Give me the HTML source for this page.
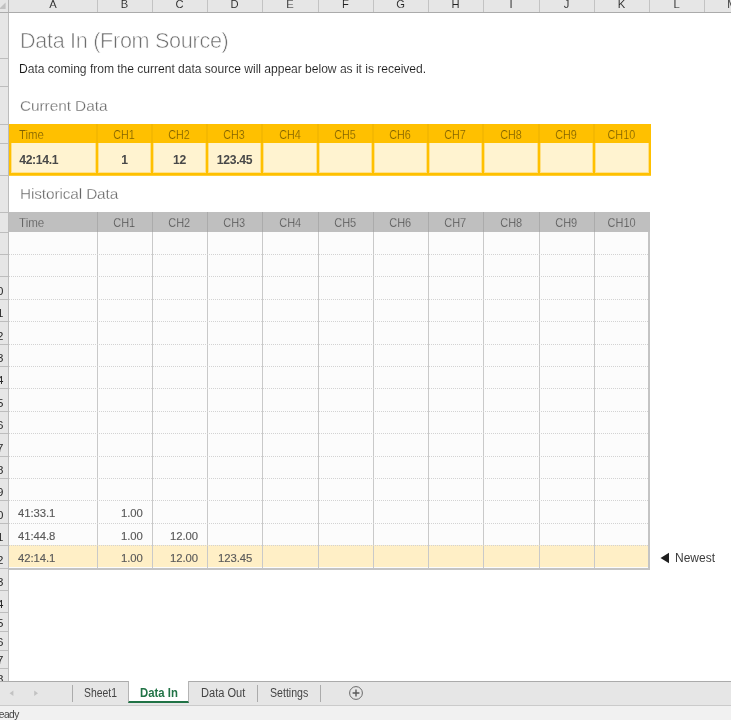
<!DOCTYPE html><html><head><meta charset="utf-8"><title>Data In</title><style>
*{margin:0;padding:0;box-sizing:border-box}
html,body{width:731px;height:720px;overflow:hidden;background:#fff}
body{position:relative;font-family:"Liberation Sans",sans-serif;color:#262626}
.abs{position:absolute}
h1,h2,.sub,.ch,.cc,.hh,.hd,.tab,.cl,.rn,#new span,#status div{will-change:transform}
#colhdr{left:0;top:0;width:731px;height:13px;background:#e6e6e6;border-bottom:1px solid #ababab}
.cl{position:absolute;top:-4.6px;height:18px;line-height:18px;font-size:11.2px;text-align:center;color:#222;-webkit-text-stroke:0.08px #e6e6e6}
.cs{position:absolute;top:0;width:1px;height:12px;background:#c3c3c3}
#rowhdr{left:0;top:13px;width:9px;height:668px;background:#e6e6e6;border-right:1px solid #bcbcbc}
.rs{position:absolute;left:0;width:8px;height:1px;background:#bdbdbd}
.rn{position:absolute;left:-20px;width:23.5px;text-align:right;font-size:11.5px;height:12px;line-height:12px;color:#262626;white-space:nowrap}
#corner{left:0;top:0;width:9px;height:13px;background:#e6e6e6;border-right:1px solid #b5b5b5;border-bottom:1px solid #ababab}
h1{position:absolute;left:20px;top:27px;font-weight:normal;font-size:21.6px;line-height:28px;color:#6e6e6e;white-space:nowrap;letter-spacing:-0.3px;-webkit-text-stroke:0.6px #fff}
.sub{position:absolute;left:19px;top:59.5px;font-size:12.1px;line-height:18px;color:#161616;white-space:nowrap;letter-spacing:-0.03px;-webkit-text-stroke:0.1px #fff}
h2{position:absolute;left:19.5px;font-weight:normal;font-size:15.4px;line-height:20px;color:#666;white-space:nowrap;letter-spacing:-0.06px;-webkit-text-stroke:0.28px #fff}
#cur{left:9px;top:124px;width:642px;height:51px;background:#ffc000}
.ch{position:absolute;top:1px;height:20px;line-height:20px;font-size:12px;color:#7f6000;text-align:center;white-space:nowrap;-webkit-text-stroke:0.2px #ffc000}
.cc{position:absolute;top:19px;height:30px;background:#fff3d0;border-left:1px solid #ffe085;border-right:1px solid #ffe085;border-bottom:1px solid #ffe38f;line-height:34px;font-size:12.2px;letter-spacing:-0.33px;font-weight:bold;color:#484848;text-align:center;white-space:nowrap}
#hist{left:9px;top:212px;width:641px;height:358px;background:#fcfcfc;border-right:2px solid #c4c4c4;border-bottom:2px solid #c4c4c4}
#hh{position:absolute;left:0;top:0;width:641px;height:20px;background:#bfbfbf}
.hh{position:absolute;top:1.3px;height:20px;line-height:20px;font-size:12.2px;color:#505050;text-align:center;white-space:nowrap;-webkit-text-stroke:0.25px #bfbfbf}
.sx{display:inline-block;transform:scaleX(0.9)}
.sxl{display:inline-block;transform:scaleX(0.95);transform-origin:0 50%}
.hv{position:absolute;top:0;width:1px;height:356px;background:#c9c9c9}
.hv2{position:absolute;top:0;width:1px;height:20px;background:#ababab}
.hl{position:absolute;left:0;width:639px;height:1px;background:repeating-linear-gradient(90deg,#d3d3d3 0,#d3d3d3 1px,transparent 1px,transparent 2px)}
.hd{position:absolute;height:22px;line-height:24px;font-size:11.3px;letter-spacing:-0.06px;color:#5a5a5a;-webkit-text-stroke:0.15px #5a5a5a;white-space:nowrap}
#new{left:660px;top:549.6px;height:16px;line-height:16px;font-size:12px;color:#3b3b3b;white-space:nowrap}
#tabs{left:0;top:681px;width:731px;height:24px;background:#e6e6e6;border-top:1px solid #ababab}
#status{left:0;top:705px;width:731px;height:15px;background:#f1f1f1;border-top:1px solid #cbcbcb}
.tab{position:absolute;top:-0.4px;height:24px;line-height:23px;font-size:12px;color:#444;white-space:nowrap}
.t{display:inline-block;transform-origin:0 50%}
.tsep{position:absolute;top:3px;width:1px;height:17px;background:#ababab}
</style></head><body>
<h1>Data In (From Source)</h1>
<div class="sub">Data coming from the current data source will appear below as it is received.</div>
<h2 style="top:95.8px">Current Data</h2>
<h2 style="top:184.2px;letter-spacing:-0.13px">Historical Data</h2>
<div id="cur" class="abs">
<div class="ch" style="left:0px;width:88px;text-align:left;padding-left:10px"><span class="sxl">Time</span></div>
<div class="cc" style="left:2px;width:85px;text-align:left;padding-left:7.2px">42:14.1</div>
<div class="ch" style="left:88px;width:55px"><span class="sx">CH1</span></div>
<div style="position:absolute;left:87px;top:0;width:2px;height:19px;background:#f5b800"></div>
<div class="cc" style="left:89px;width:53px">1</div>
<div class="ch" style="left:143px;width:55px"><span class="sx">CH2</span></div>
<div style="position:absolute;left:142px;top:0;width:2px;height:19px;background:#f5b800"></div>
<div class="cc" style="left:144px;width:53px">12</div>
<div class="ch" style="left:198px;width:55px"><span class="sx">CH3</span></div>
<div style="position:absolute;left:197px;top:0;width:2px;height:19px;background:#f5b800"></div>
<div class="cc" style="left:199px;width:53px">123.45</div>
<div class="ch" style="left:253px;width:56px"><span class="sx">CH4</span></div>
<div style="position:absolute;left:252px;top:0;width:2px;height:19px;background:#f5b800"></div>
<div class="cc" style="left:254px;width:54px"></div>
<div class="ch" style="left:309px;width:55px"><span class="sx">CH5</span></div>
<div style="position:absolute;left:308px;top:0;width:2px;height:19px;background:#f5b800"></div>
<div class="cc" style="left:310px;width:53px"></div>
<div class="ch" style="left:364px;width:55px"><span class="sx">CH6</span></div>
<div style="position:absolute;left:363px;top:0;width:2px;height:19px;background:#f5b800"></div>
<div class="cc" style="left:365px;width:53px"></div>
<div class="ch" style="left:419px;width:55px"><span class="sx">CH7</span></div>
<div style="position:absolute;left:418px;top:0;width:2px;height:19px;background:#f5b800"></div>
<div class="cc" style="left:420px;width:53px"></div>
<div class="ch" style="left:474px;width:56px"><span class="sx">CH8</span></div>
<div style="position:absolute;left:473px;top:0;width:2px;height:19px;background:#f5b800"></div>
<div class="cc" style="left:475px;width:54px"></div>
<div class="ch" style="left:530px;width:55px"><span class="sx">CH9</span></div>
<div style="position:absolute;left:529px;top:0;width:2px;height:19px;background:#f5b800"></div>
<div class="cc" style="left:531px;width:53px"></div>
<div class="ch" style="left:585px;width:55px"><span class="sx">CH10</span></div>
<div style="position:absolute;left:584px;top:0;width:2px;height:19px;background:#f5b800"></div>
<div class="cc" style="left:586px;width:54px"></div>
</div>
<div class="abs" style="left:9px;top:175px;width:642px;height:1px;background:#ffcd33"></div>
<div id="hist" class="abs"><div id="hh"></div>
<div class="hh" style="left:0px;width:88px;text-align:left;padding-left:10px"><span class="sxl">Time</span></div>
<div class="hh" style="left:88px;width:55px"><span class="sx">CH1</span></div>
<div class="hh" style="left:143px;width:55px"><span class="sx">CH2</span></div>
<div class="hh" style="left:198px;width:55px"><span class="sx">CH3</span></div>
<div class="hh" style="left:253px;width:56px"><span class="sx">CH4</span></div>
<div class="hh" style="left:309px;width:55px"><span class="sx">CH5</span></div>
<div class="hh" style="left:364px;width:55px"><span class="sx">CH6</span></div>
<div class="hh" style="left:419px;width:55px"><span class="sx">CH7</span></div>
<div class="hh" style="left:474px;width:56px"><span class="sx">CH8</span></div>
<div class="hh" style="left:530px;width:55px"><span class="sx">CH9</span></div>
<div class="hh" style="left:585px;width:55px"><span class="sx">CH10</span></div>
<div style="position:absolute;left:0;top:333px;width:639px;height:22px;background:#ffefc6"></div>
<div class="hv" style="left:88px"></div>
<div class="hv2" style="left:88px"></div>
<div class="hv" style="left:143px"></div>
<div class="hv2" style="left:143px"></div>
<div class="hv" style="left:198px"></div>
<div class="hv2" style="left:198px"></div>
<div class="hv" style="left:253px"></div>
<div class="hv2" style="left:253px"></div>
<div class="hv" style="left:309px"></div>
<div class="hv2" style="left:309px"></div>
<div class="hv" style="left:364px"></div>
<div class="hv2" style="left:364px"></div>
<div class="hv" style="left:419px"></div>
<div class="hv2" style="left:419px"></div>
<div class="hv" style="left:474px"></div>
<div class="hv2" style="left:474px"></div>
<div class="hv" style="left:530px"></div>
<div class="hv2" style="left:530px"></div>
<div class="hv" style="left:585px"></div>
<div class="hv2" style="left:585px"></div>
<div class="hl" style="top:42px"></div>
<div class="hl" style="top:64px"></div>
<div class="hl" style="top:87px"></div>
<div class="hl" style="top:109px"></div>
<div class="hl" style="top:132px"></div>
<div class="hl" style="top:154px"></div>
<div class="hl" style="top:176px"></div>
<div class="hl" style="top:199px"></div>
<div class="hl" style="top:221px"></div>
<div class="hl" style="top:244px"></div>
<div class="hl" style="top:266px"></div>
<div class="hl" style="top:288px"></div>
<div class="hl" style="top:311px"></div>
<div class="hl" style="top:333px"></div>
<div class="hd" style="left:9.2px;top:289px">41:33.1</div>
<div class="hd" style="right:505.4px;top:289px">1.00</div>
<div class="hd" style="left:9.2px;top:312px">41:44.8</div>
<div class="hd" style="right:505.4px;top:312px">1.00</div>
<div class="hd" style="right:450.4px;top:312px">12.00</div>
<div class="hd" style="left:9.2px;top:334px">42:14.1</div>
<div class="hd" style="right:505.4px;top:334px">1.00</div>
<div class="hd" style="right:450.4px;top:334px">12.00</div>
<div class="hd" style="right:395.4px;top:334px">123.45</div>
</div>
<div id="new" class="abs"><svg width="10" height="12" viewBox="0 0 10 12" style="position:absolute;left:0;top:2px"><polygon points="0.5,6 9,0.8 9,11.2" fill="#1f1f1f"/></svg><span style="position:absolute;left:14.5px;top:0">Newest</span></div>
<div id="colhdr" class="abs">
<div class="cl" style="left:9px;width:88px">A</div>
<div class="cs" style="left:97px"></div>
<div class="cl" style="left:97px;width:55px">B</div>
<div class="cs" style="left:152px"></div>
<div class="cl" style="left:152px;width:55px">C</div>
<div class="cs" style="left:207px"></div>
<div class="cl" style="left:207px;width:55px">D</div>
<div class="cs" style="left:262px"></div>
<div class="cl" style="left:262px;width:56px">E</div>
<div class="cs" style="left:318px"></div>
<div class="cl" style="left:318px;width:55px">F</div>
<div class="cs" style="left:373px"></div>
<div class="cl" style="left:373px;width:55px">G</div>
<div class="cs" style="left:428px"></div>
<div class="cl" style="left:428px;width:55px">H</div>
<div class="cs" style="left:483px"></div>
<div class="cl" style="left:483px;width:56px">I</div>
<div class="cs" style="left:539px"></div>
<div class="cl" style="left:539px;width:55px">J</div>
<div class="cs" style="left:594px"></div>
<div class="cl" style="left:594px;width:55px">K</div>
<div class="cs" style="left:649px"></div>
<div class="cl" style="left:649px;width:55px">L</div>
<div class="cs" style="left:704px"></div>
<div class="cl" style="left:704px;width:56px">M</div>
<div class="cs" style="left:760px"></div>
</div>
<div id="rowhdr" class="abs">
<div class="rs" style="top:45px"></div>
<div class="rs" style="top:73px"></div>
<div class="rs" style="top:111px"></div>
<div class="rs" style="top:130px"></div>
<div class="rs" style="top:162px"></div>
<div class="rs" style="top:199px"></div>
<div class="rs" style="top:219px"></div>
<div class="rs" style="top:241px"></div>
<div class="rs" style="top:263px"></div>
<div class="rs" style="top:286px"></div>
<div class="rn" style="top:272px">10</div>
<div class="rs" style="top:308px"></div>
<div class="rn" style="top:294px">11</div>
<div class="rs" style="top:331px"></div>
<div class="rn" style="top:317px">12</div>
<div class="rs" style="top:353px"></div>
<div class="rn" style="top:339px">13</div>
<div class="rs" style="top:375px"></div>
<div class="rn" style="top:361px">14</div>
<div class="rs" style="top:398px"></div>
<div class="rn" style="top:384px">15</div>
<div class="rs" style="top:420px"></div>
<div class="rn" style="top:406px">16</div>
<div class="rs" style="top:443px"></div>
<div class="rn" style="top:429px">17</div>
<div class="rs" style="top:465px"></div>
<div class="rn" style="top:451px">18</div>
<div class="rs" style="top:487px"></div>
<div class="rn" style="top:473px">19</div>
<div class="rs" style="top:510px"></div>
<div class="rn" style="top:496px">20</div>
<div class="rs" style="top:532px"></div>
<div class="rn" style="top:518px">21</div>
<div class="rs" style="top:555px"></div>
<div class="rn" style="top:541px">22</div>
<div class="rs" style="top:577px"></div>
<div class="rn" style="top:563px">23</div>
<div class="rs" style="top:599px"></div>
<div class="rn" style="top:585px">24</div>
<div class="rs" style="top:618px"></div>
<div class="rn" style="top:604px">25</div>
<div class="rs" style="top:637px"></div>
<div class="rn" style="top:623px">26</div>
<div class="rs" style="top:655px"></div>
<div class="rn" style="top:641px">27</div>
<div class="rn" style="top:660px">28</div>
<div class="rn" style="top:678px">29</div>
</div>
<div id="corner" class="abs"><svg width="8" height="12" style="position:absolute;left:0;top:0"><polygon points="5.6,2.4 5.6,9 -1,9" fill="#c2c2c2"/></svg></div>
<div id="tabs" class="abs">
<svg width="50" height="24" style="position:absolute;left:0;top:0"><polygon points="9.6,11.2 13.4,8.4 13.4,14" fill="#c2c2c2"/><polygon points="38,11.2 34.2,8.4 34.2,14" fill="#c2c2c2"/></svg>
<div class="tsep" style="left:72px;top:3px;height:17px"></div>
<div class="tab" style="left:84px"><span class="t" style="transform:scaleX(0.865)">Sheet1</span></div>
<div style="position:absolute;left:128px;top:-1px;width:61px;height:22px;background:#fff;border-left:1px solid #b4b4b4;border-right:1px solid #b4b4b4;border-bottom:2px solid #217346"></div>
<div class="tab" style="left:139.5px;font-weight:bold;color:#217346"><span class="t" style="transform:scaleX(0.945)">Data In</span></div>
<div class="tab" style="left:200.5px"><span class="t" style="transform:scaleX(0.923)">Data Out</span></div>
<div class="tsep" style="left:257px"></div>
<div class="tab" style="left:269.5px"><span class="t" style="transform:scaleX(0.882)">Settings</span></div>
<div class="tsep" style="left:320px"></div>
<svg width="18" height="18" viewBox="0 0 18 18" style="position:absolute;left:347px;top:2.4px"><circle cx="9" cy="9" r="6.4" fill="none" stroke="#6a6a6a" stroke-width="1"/><path d="M9 5.6v6.8M5.6 9h6.8" stroke="#5a5a5a" stroke-width="1.4" fill="none"/></svg>
</div>
<div id="status" class="abs"><div style="position:absolute;left:-7.7px;top:2.2px;font-size:10.2px;letter-spacing:-0.55px;line-height:14px;color:#444">Ready</div></div>
</body></html>
